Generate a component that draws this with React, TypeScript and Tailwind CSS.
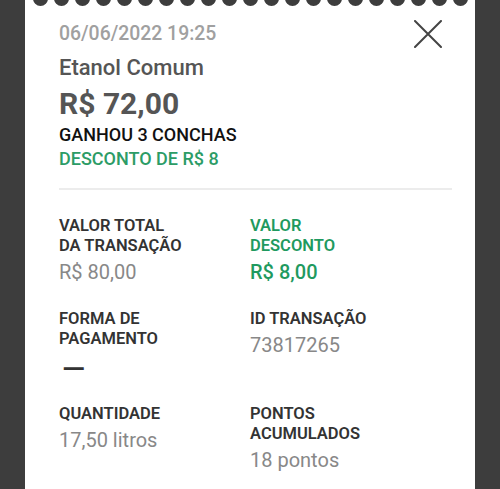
const scallops = Array.from({ length: 21 });

const Info = ({
  label,
  value,
  green = false,
}: {
  label: string[];
  value: string;
  green?: boolean;
}) => (
  <div className="flex flex-col">
    {label.map((l) => (
      <span
        key={l}
        className={`text-[16.5px] font-semibold leading-[20px] ${green ? "text-[#1f9a5f]" : "text-[#333333]"}`}
      >
        {l}
      </span>
    ))}
    <span
      className={`mt-[5px] text-[20px] leading-[22px] ${green ? "font-medium text-[#1f9a5f]" : "text-[#888888]"}`}
    >
      {value}
    </span>
  </div>
);

export default function App() {
  return (
    <div className="h-[489px] w-[500px] overflow-hidden bg-[#3d3d3d] font-['Roboto',sans-serif]">
      <div className="relative mx-auto h-full w-[450px] bg-white">
        <div className="absolute left-0 right-0 top-[-9px] flex justify-center gap-[6px]">
          {scallops.map((_, i) => (
            <div key={i} className="h-[15px] w-[15px] rounded-full bg-[#3d3d3d]" />
          ))}
        </div>

        <button className="absolute right-[33px] top-[20px] text-[#444444]">
          <svg width="28" height="28" viewBox="0 0 28 28" fill="none">
            <path d="M1 1L27 27M27 1L1 27" stroke="currentColor" strokeWidth="2" strokeLinecap="round" />
          </svg>
        </button>

        <div className="flex flex-col px-[34px] pt-[22px]">
          <span className="text-[19.4px] font-medium leading-[24px] text-[#a0a0a0]">06/06/2022 19:25</span>
          <span className="mt-[9px] text-[22px] font-medium leading-[26px] text-[#555555]">Etanol Comum</span>
          <span className="mt-[5px] text-[30px] font-bold leading-[36px] text-[#555555]">R$ 72,00</span>
          <span className="mt-[1px] text-[18px] font-medium leading-[24px] text-[#111111]">GANHOU 3 CONCHAS</span>
          <span className="text-[18px] font-medium leading-[24px] text-[#2c9c66]">DESCONTO DE R$ 8</span>
          <div className="mt-[17px] mr-[-11px] h-[2px] bg-[#ececec]" />

          <div className="mt-[26px] grid grid-cols-2 gap-y-[26px]">
            <Info label={["VALOR TOTAL", "DA TRANSAÇÃO"]} value="R$ 80,00" />
            <Info label={["VALOR", "DESCONTO"]} value="R$ 8,00" green />
            <div className="flex flex-col">
              <span className="text-[16.5px] font-semibold leading-[20px] text-[#333333]">FORMA DE</span>
              <span className="text-[16.5px] font-semibold leading-[20px] text-[#333333]">PAGAMENTO</span>
              <span className="mt-[11px] pl-[3px] text-[30px] font-medium leading-[18px] text-[#333333]">—</span>
            </div>
            <Info label={["ID TRANSAÇÃO"]} value="73817265" />
            <Info label={["QUANTIDADE"]} value="17,50 litros" />
            <Info label={["PONTOS", "ACUMULADOS"]} value="18 pontos" />
          </div>
        </div>
      </div>
    </div>
  );
}
